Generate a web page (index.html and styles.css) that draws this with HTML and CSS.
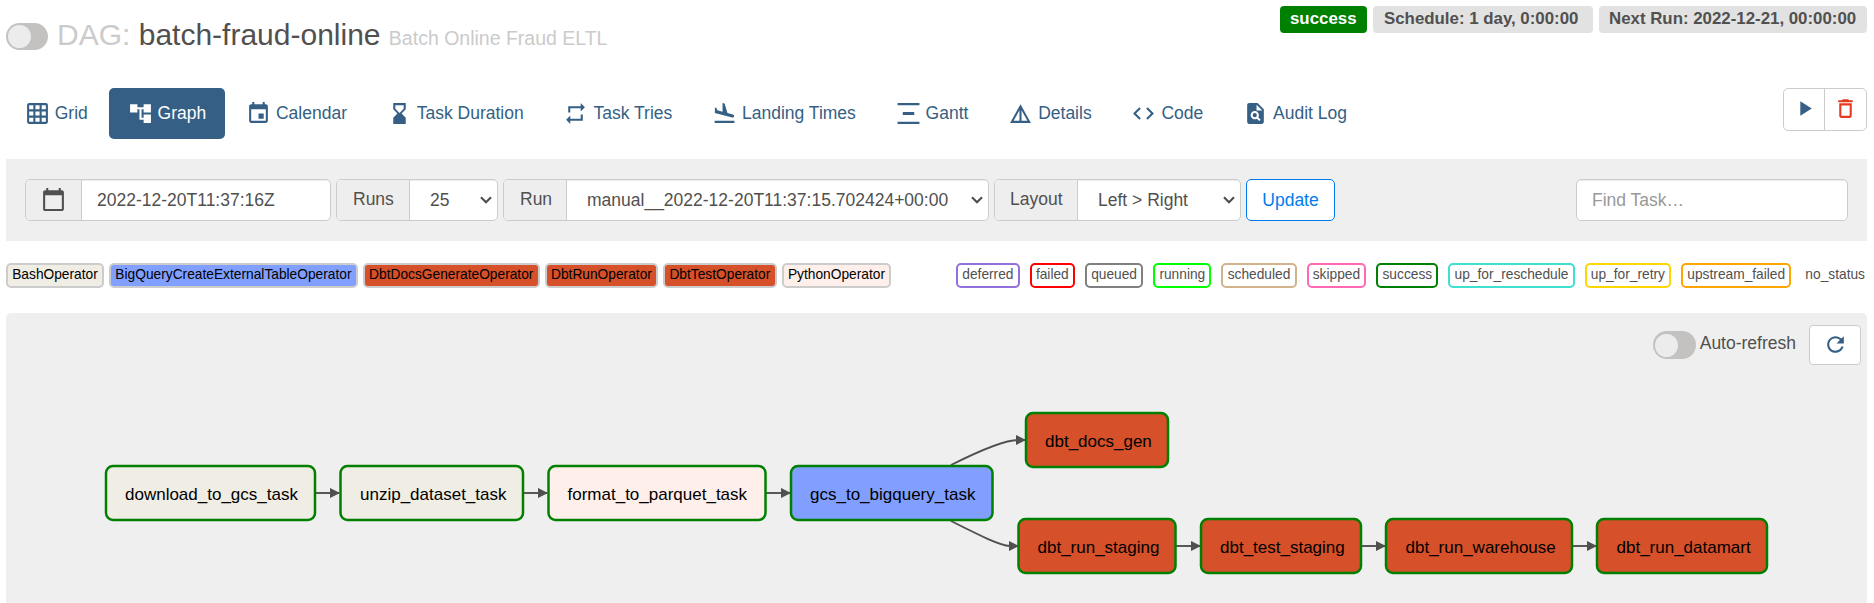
FILE: index.html
```html
<!DOCTYPE html>
<html lang="en">
<head>
<meta charset="utf-8">
<title>batch-fraud-online - Graph - Airflow</title>
<link rel="stylesheet" href="styles.css">
</head>
<body>
<header class="head">
  <div class="title-row">
    <span class="switch"></span>
    <h1 class="title"><span class="muted">DAG:</span> batch-fraud-online <small class="muted">Batch Online Fraud ELTL</small></h1>
  </div>
  <div class="labels">
    <span class="label label-success">success</span>
    <span class="label label-schedule">Schedule: 1 day, 0:00:00</span>
    <span class="label label-next">Next Run: 2022-12-21, 00:00:00</span>
  </div>
</header>

<div class="nav-row">
  <nav class="tabs">
    <a class="tab"><svg class="icon" viewBox="0 0 24 24"><path d="M20 2H4c-1.1 0-2 .9-2 2v16c0 1.1.9 2 2 2h16c1.1 0 2-.9 2-2V4c0-1.1-.9-2-2-2zM8 20H4v-4h4v4zm0-6H4v-4h4v4zm0-6H4V4h4v4zm6 12h-4v-4h4v4zm0-6h-4v-4h4v4zm0-6h-4V4h4v4zm6 12h-4v-4h4v4zm0-6h-4v-4h4v4zm0-6h-4V4h4v4z"/></svg>Grid</a>
    <a class="tab tab-active"><svg class="icon" viewBox="0 0 24 24"><path d="M22 11V3h-7v3H9V3H2v8h7V8h2v10h4v3h7v-8h-7v3h-2V8h2v3z"/></svg>Graph</a>
    <a class="tab"><svg class="icon" viewBox="0 0 24 24"><path d="M17 12h-5v5h5v-5zM16 1v2H8V1H6v2H5c-1.11 0-1.99.9-1.99 2L3 19c0 1.1.89 2 2 2h14c1.1 0 2-.9 2-2V5c0-1.1-.9-2-2-2h-1V1h-2zm3 18H5V8h14v11z"/></svg>Calendar</a>
    <a class="tab"><svg class="icon" viewBox="0 0 24 24"><path d="M18 22l-.01-6L14 12l3.99-4.01L18 2H6v6l4 4-4 3.99V22h12zM8 7.500V4h8v3.500l-4 4-4-4z"/></svg>Task Duration</a>
    <a class="tab"><svg class="icon" viewBox="0 0 24 24"><path d="M7 7h10v3l4-4-4-4v3H5v6h2V7zm10 10H7v-3l-4 4 4 4v-3h12v-6h-2v4z"/></svg>Task Tries</a>
    <a class="tab"><svg class="icon" viewBox="0 0 24 24"><path d="M2.500 19h19v2h-19v-2zm16.840-3.150c.8.210 1.620-.260 1.840-1.060.210-.800-.260-1.620-1.060-1.840l-5.310-1.420-2.760-9.020L10.120 2v8.280L5.150 8.950l-.930-2.320-1.450-.390v5.170l16.570 4.440z"/></svg>Landing Times</a>
    <a class="tab"><svg class="icon" viewBox="0 0 24 24"><path d="M1.500 2h21v2h-21zM6.500 10.500h11v3h-11zM1.500 20h21v2h-21z"/></svg>Gantt</a>
    <a class="tab"><svg class="icon" viewBox="0 0 24 24"><path d="M12 3L2 21h20L12 3zm1 5.920L18.600 19H13V8.920zm-2 0V19H5.400L11 8.920z"/></svg>Details</a>
    <a class="tab"><svg class="icon" viewBox="0 0 24 24"><path d="M9.400 16.600L4.800 12l4.600-4.600L8 6l-6 6 6 6 1.400-1.400zm5.200 0l4.600-4.600-4.600-4.600L16 6l6 6-6 6-1.400-1.400z"/></svg>Code</a>
    <a class="tab"><svg class="icon" viewBox="0 0 24 24"><path fill-rule="evenodd" d="M14 2H6c-1.100 0-2 .900-2 2v16c0 1.100.890 2 1.990 2H18c1.100 0 2-.900 2-2V8l-6-6zm-1 7V3.500L18.500 9H13zM15.600 19.300l-2.300-2.300a4 4 0 1 1 1.400-1.400l2.300 2.300zM11.300 11.600a2 2 0 1 0 0 4 2 2 0 0 0 0-4z"/></svg>Audit Log</a>
  </nav>
  <div class="actions">
    <a class="action"><svg class="icon" viewBox="0 0 24 24"><path d="M8 5v14l11-7z"/></svg></a>
    <a class="action action-delete"><svg class="icon" viewBox="0 0 24 24"><path d="M6 19c0 1.100.900 2 2 2h8c1.100 0 2-.900 2-2V7H6v12zM8 9h8v10H8V9zm7.500-5l-1-1h-5l-1 1H5v2h14V4z"/></svg></a>
  </div>
</div>

<form class="filters">
  <div class="group group-date"><span class="addon"><svg class="icon icon-date" viewBox="0 0 24 24"><path d="M20 3h-1V1h-2v2H7V1H5v2H4c-1.100 0-2 .900-2 2v16c0 1.100.900 2 2 2h16c1.100 0 2-.900 2-2V5c0-1.100-.900-2-2-2zm0 18H4V8h16v13z"/></svg></span><span class="field">2022-12-20T11:37:16Z</span></div>
  <div class="group group-runs"><span class="addon">Runs</span><span class="field select">25<svg class="chevron" viewBox="0 0 12 8"><path d="M1 1.200l5 5 5-5"/></svg></span></div>
  <div class="group group-run"><span class="addon">Run</span><span class="field select">manual__2022-12-20T11:37:15.702424+00:00<svg class="chevron" viewBox="0 0 12 8"><path d="M1 1.200l5 5 5-5"/></svg></span></div>
  <div class="group group-layout"><span class="addon">Layout</span><span class="field select">Left &gt; Right<svg class="chevron" viewBox="0 0 12 8"><path d="M1 1.200l5 5 5-5"/></svg></span></div>
  <span class="update">Update</span>
  <span class="find">Find Task…</span>
</form>

<div class="legend">
  <div class="operators">
    <span class="op op-bash">BashOperator</span>
    <span class="op op-bigquery">BigQueryCreateExternalTableOperator</span>
    <span class="op op-dbt">DbtDocsGenerateOperator</span>
    <span class="op op-dbt">DbtRunOperator</span>
    <span class="op op-dbt">DbtTestOperator</span>
    <span class="op op-python">PythonOperator</span>
  </div>
  <div class="states">
    <span class="state deferred">deferred</span>
    <span class="state failed">failed</span>
    <span class="state queued">queued</span>
    <span class="state running">running</span>
    <span class="state scheduled">scheduled</span>
    <span class="state skipped">skipped</span>
    <span class="state success">success</span>
    <span class="state reschedule">up_for_reschedule</span>
    <span class="state retry">up_for_retry</span>
    <span class="state upstream">upstream_failed</span>
    <span class="state none">no_status</span>
  </div>
</div>

<main class="graph">
  <div class="refresh">
    <span class="switch"></span>
    <span class="refresh-label">Auto-refresh</span>
    <a class="refresh-button"><svg class="icon" viewBox="0 0 24 24"><path d="M17.650 6.350C16.200 4.900 14.210 4 12 4c-4.420 0-7.990 3.580-7.990 8s3.570 8 7.990 8c3.730 0 6.840-2.550 7.730-6h-2.080c-.820 2.330-3.040 4-5.650 4-3.310 0-6-2.690-6-6s2.690-6 6-6c1.660 0 3.140.690 4.220 1.780L13 11h7V4l-2.350 2.350z"/></svg></a>
  </div>
  <svg class="dag" viewBox="6 313 1861 290">
    <defs><marker id="arrow" viewBox="0 0 10 10" refX="9" refY="5" markerUnits="userSpaceOnUse" markerWidth="10.500" markerHeight="10.500" orient="auto"><path class="arrowhead" d="M0 0L10 5L0 10z"/></marker></defs>
    <g class="edges">
      <path d="M315 493H339"/><path d="M523 493H547"/><path d="M766 493H790"/>
      <path d="M951 465C975 453 1003 440 1018 440H1025"/>
      <path d="M951 521C975 533 998 545 1010 546H1018"/>
      <path d="M1175 546H1200"/><path d="M1361 546H1385"/><path d="M1572 546H1596"/>
    </g>
    <g class="nodes">
      <rect class="bash" x="106" y="466" width="209" height="54" rx="7"/><text x="125" y="500">download_to_gcs_task</text>
      <rect class="bash" x="340.500" y="466" width="182.500" height="54" rx="7"/><text x="360" y="500">unzip_dataset_task</text>
      <rect class="python" x="548.500" y="466" width="217" height="54" rx="7"/><text x="567.500" y="500">format_to_parquet_task</text>
      <rect class="bigquery" x="791" y="466" width="201.500" height="54" rx="7"/><text x="810" y="500">gcs_to_bigquery_task</text>
      <rect class="dbt" x="1026" y="413" width="142" height="54" rx="7"/><text x="1045" y="447">dbt_docs_gen</text>
      <rect class="dbt" x="1018.500" y="519" width="157" height="54" rx="7"/><text x="1037.500" y="553">dbt_run_staging</text>
      <rect class="dbt" x="1201" y="519" width="160" height="54" rx="7"/><text x="1220" y="553">dbt_test_staging</text>
      <rect class="dbt" x="1386" y="519" width="186" height="54" rx="7"/><text x="1405.500" y="553">dbt_run_warehouse</text>
      <rect class="dbt" x="1597" y="519" width="170" height="54" rx="7"/><text x="1616.500" y="553">dbt_run_datamart</text>
    </g>
  </svg>
</main>
</body>
</html>
```

FILE: styles.css
```css
* { box-sizing: border-box; }
body {
  margin: 0;
  padding: 6px 7px 0 6px;
  height: 603px;
  overflow: hidden;
  background: #fff;
  color: #51504f;
  font: 17.5px/25px "Liberation Sans", Arial, sans-serif;
}
.icon { width: 25px; height: 25px; fill: currentColor; flex: none; display: block; }

.head { display: flex; justify-content: space-between; height: 82px; }
.title-row { display: flex; align-items: flex-start; gap: 9px; padding-top: 17px; }
.switch { width: 42px; height: 27px; border-radius: 14px; background: #c4c2c1; padding: 2px 1.500px; flex: none; }
.switch::before { content: ""; display: block; width: 23px; height: 23px; border-radius: 50%; background: #edecec; }
.title { margin: -6px 0 0; font-size: 30px; line-height: 36px; font-weight: 400; white-space: nowrap; }
.title small { font-size: 19.500px; }
.muted { color: #cbcbcb; }
.labels { display: flex; gap: 6px; height: 27px; }
.label { border-radius: 4px; background: #e2e2e2; font-weight: 700; font-size: 16.850px; line-height: 25px; padding-left: 11px; white-space: nowrap; height: 27px; }
.label-success { width: 87px; background: #008000; color: #fff; padding-left: 10px; }
.label-schedule { width: 220px; }
.label-next { width: 268px; padding-left: 10px; }

.nav-row { display: flex; justify-content: space-between; align-items: flex-start; height: 71px; color: #355f84; }
.tabs { display: flex; gap: 2.250px; }
.tab { display: flex; align-items: center; gap: 5px; height: 51px; padding: 0 18.750px; border-radius: 5px; white-space: nowrap; }
.tab-active { background: #355f84; color: #fff; }
.actions { display: flex; border: 1px solid #ccc; border-radius: 5px; width: 84px; height: 43px; }
.action { width: 40px; display: flex; justify-content: center; padding-top: 7px; }
.action-delete { width: 42px; color: #e43921; border-left: 1px solid #ccc; }

.filters { display: flex; align-items: center; height: 82px; padding: 0 19px; background: #efefef; }
.group { display: flex; height: 42px; border: 1px solid #ccc; border-radius: 5px; overflow: hidden; background: #fff; margin-right: 5px; white-space: nowrap; }
.addon { flex: none; background: #eee; border-right: 1px solid #ccc; padding-left: 16px; line-height: 38px; }
.field { flex: 1; padding-left: 15px; line-height: 40px; box-shadow: inset 0 1px 1px rgba(0,0,0,.075); }
.select { display: flex; align-items: center; justify-content: space-between; padding: 0 5px 0 20px; }
.chevron { width: 12px; height: 8px; fill: none; stroke: #51504f; stroke-width: 2.200; }
.group-date { width: 306px; }
.group-date .addon { width: 56px; padding: 7px 0 0 15px; }
.group-runs { width: 162px; }
.group-runs .addon { width: 73px; }
.group-run { width: 486px; }
.group-run .addon { width: 63px; }
.group-layout { width: 247px; }
.group-layout .addon { width: 83px; padding-left: 15px; }
.update { width: 89px; height: 42px; border: 1px solid #017cee; border-radius: 5px; background: #fff; color: #017cee; text-align: center; line-height: 40px; }
.find { width: 272px; height: 42px; margin-left: auto; border: 1px solid #ccc; border-radius: 5px; background: #fff; color: #999; padding-left: 15px; line-height: 40px; box-shadow: inset 0 1px 1px rgba(0,0,0,.075); }

.legend { display: flex; justify-content: space-between; padding-top: 22px; height: 72px; font-size: 13.750px; line-height: 20px; white-space: nowrap; }
.operators { display: flex; gap: 5.200px; }
.states { display: flex; gap: 10px; }
.op, .state { height: 25px; border: 2px solid #ccc; border-radius: 5px; padding: 0 4.200px; }
.op { color: #000; }
.op-bash { background: #f0ede4; }
.op-bigquery { background: #819fff; }
.op-dbt { background: #d65029; }
.op-python { background: #ffefeb; }
.deferred { border-color: mediumpurple; }
.failed { border-color: red; }
.queued { border-color: gray; }
.running { border-color: lime; }
.scheduled { border-color: tan; }
.skipped { border-color: hotpink; }
.success { border-color: green; }
.reschedule { border-color: turquoise; }
.retry { border-color: gold; }
.upstream { border-color: orange; }
.none { border-color: transparent; padding: 0 0 0 2px; }

.graph { height: 290px; background: #efefef; border-radius: 5px 5px 0 0; position: relative; }
.refresh { display: flex; justify-content: flex-end; padding: 12px 6px 0 0; }
.refresh .switch { width: 43px; height: 28px; margin-top: 6px; padding: 2.500px; }
.refresh-label { margin: 6px 13px 0 4px; }
.refresh-button { width: 52px; height: 40px; background: #fff; border: 1px solid #ccc; border-radius: 4px; color: #355f84; display: flex; justify-content: center; padding-top: 6px; }
.dag { position: absolute; inset: 0; width: 1861px; height: 290px; }
.edges path { fill: none; stroke: #51504f; stroke-width: 1.900; marker-end: url(#arrow); }
.arrowhead { fill: #51504f; }
.nodes rect { stroke: green; stroke-width: 2.500; }
.nodes text { font-size: 17px; fill: #000; }
.bash { fill: #f0ede4; }
.python { fill: #ffefeb; }
.bigquery { fill: #819fff; }
.dbt { fill: #d65029; }
```
